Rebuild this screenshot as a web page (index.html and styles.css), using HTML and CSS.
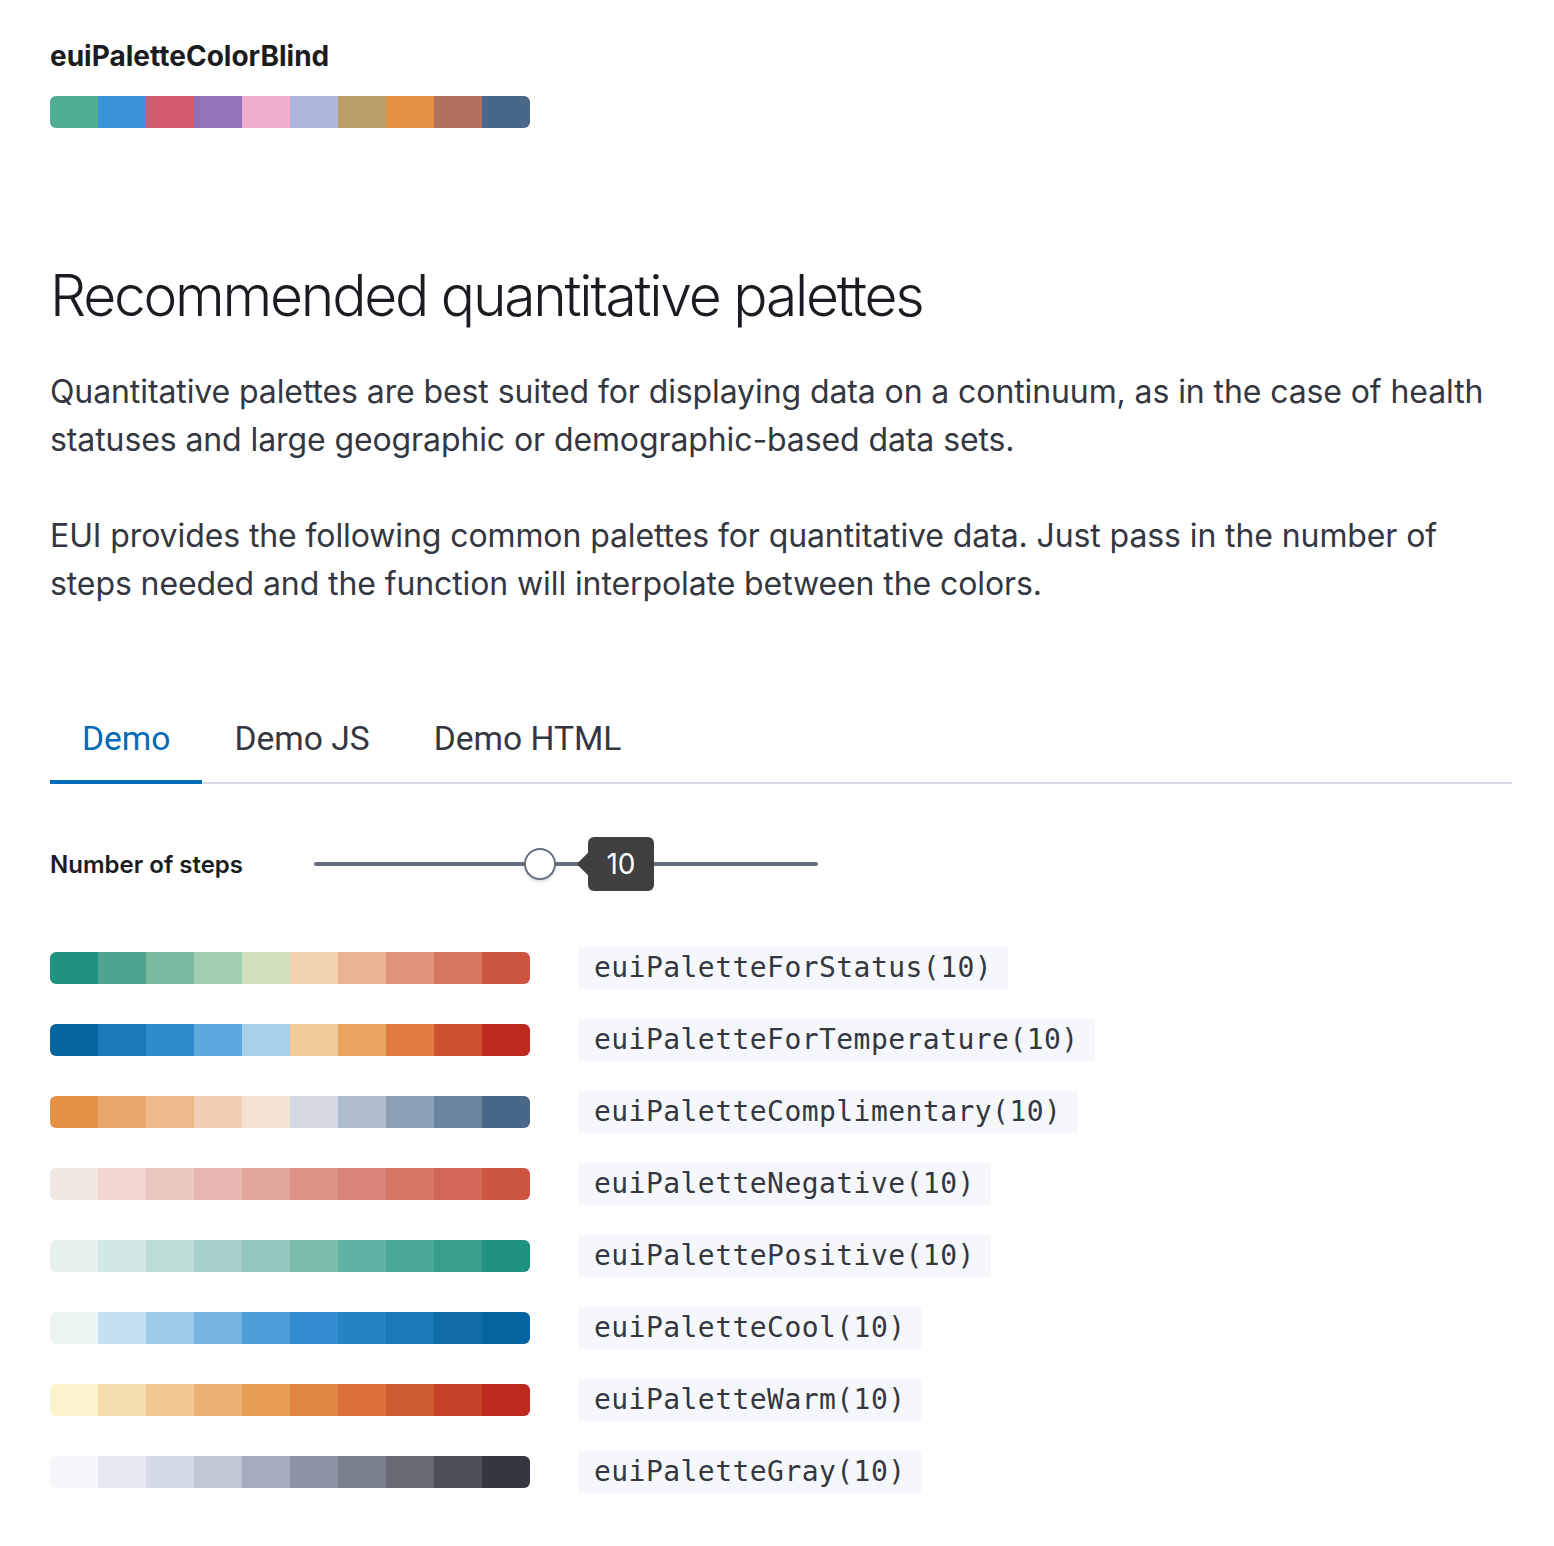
FILE: index.html
```html
<!DOCTYPE html>
<html lang="en">
<head>
<meta charset="UTF-8">
<title>Color palettes</title>
<link rel="stylesheet" href="styles.css">
</head>
<body>
<div class="page">

  <!-- Colour blind palette -->
  <h3 class="small-title">euiPaletteColorBlind</h3>
  <div class="bar">
    <span style="background:#4fae93"></span>
    <span style="background:#3893d8"></span>
    <span style="background:#d35c73"></span>
    <span style="background:#9272bb"></span>
    <span style="background:#eeaed0"></span>
    <span style="background:#adb6dc"></span>
    <span style="background:#b99f67"></span>
    <span style="background:#e49245"></span>
    <span style="background:#b27060"></span>
    <span style="background:#48688a"></span>
  </div>

  <h2 class="big-title">Recommended quantitative palettes</h2>
  <p class="text">Quantitative palettes are best suited for displaying data on a continuum, as in the case of health statuses and large geographic or demographic-based data sets.</p>
  <p class="text">EUI provides the following common palettes for quantitative data. Just pass in the number of steps needed and the function will interpolate between the colors.</p>

  <!-- Tabs -->
  <div class="tabs">
    <div class="tab active">Demo</div>
    <div class="tab">Demo JS</div>
    <div class="tab">Demo HTML</div>
  </div>

  <!-- Slider -->
  <div class="steps-row">
    <label class="steps-label">Number of steps</label>
    <div class="range">
      <div class="track"></div>
      <div class="thumb"></div>
      <div class="range-value">10</div>
    </div>
  </div>

  <!-- Palettes -->
  <div class="palettes">
    <div class="palette-row">
      <div class="bar">
        <span style="background:#209280"></span><span style="background:#4da58f"></span><span style="background:#7aba9e"></span><span style="background:#a3cdb0"></span><span style="background:#cfe1bf"></span><span style="background:#f1d3b0"></span><span style="background:#e7b394"></span><span style="background:#df9579"></span><span style="background:#d57760"></span><span style="background:#cc5642"></span>
      </div>
      <code class="fn">euiPaletteForStatus(10)</code>
    </div>
    <div class="palette-row">
      <div class="bar">
        <span style="background:#0665a1"></span><span style="background:#1978b6"></span><span style="background:#2d8cca"></span><span style="background:#5ca9de"></span><span style="background:#a8cfe8"></span><span style="background:#f1cb97"></span><span style="background:#e9a45f"></span><span style="background:#df7c3f"></span><span style="background:#cd512e"></span><span style="background:#bc2a20"></span>
      </div>
      <code class="fn">euiPaletteForTemperature(10)</code>
    </div>
    <div class="palette-row">
      <div class="bar">
        <span style="background:#e49246"></span><span style="background:#e7a66c"></span><span style="background:#eeb98b"></span><span style="background:#f0cfb4"></span><span style="background:#f3e3d7"></span><span style="background:#d4d9e3"></span><span style="background:#afbdcd"></span><span style="background:#8da1b6"></span><span style="background:#6a849e"></span><span style="background:#486889"></span>
      </div>
      <code class="fn">euiPaletteComplimentary(10)</code>
    </div>
    <div class="palette-row">
      <div class="bar">
        <span style="background:#f2e6e3"></span><span style="background:#f2d4d1"></span><span style="background:#ebc7c2"></span><span style="background:#e8b6b0"></span><span style="background:#e2a69c"></span><span style="background:#dd9486"></span><span style="background:#d9857a"></span><span style="background:#d77665"></span><span style="background:#d06655"></span><span style="background:#cc5642"></span>
      </div>
      <code class="fn">euiPaletteNegative(10)</code>
    </div>
    <div class="palette-row">
      <div class="bar">
        <span style="background:#e7f1ef"></span><span style="background:#d4e8e5"></span><span style="background:#bcddd7"></span><span style="background:#a6d0cb"></span><span style="background:#92c8be"></span><span style="background:#78bca9"></span><span style="background:#61b2a5"></span><span style="background:#4aa897"></span><span style="background:#379e8b"></span><span style="background:#209280"></span>
      </div>
      <code class="fn">euiPalettePositive(10)</code>
    </div>
    <div class="palette-row">
      <div class="bar">
        <span style="background:#ecf4f4"></span><span style="background:#c5e0f1"></span><span style="background:#9ec9e8"></span><span style="background:#75b6e0"></span><span style="background:#4d9fd9"></span><span style="background:#328ed1"></span><span style="background:#2583c3"></span><span style="background:#1b78b6"></span><span style="background:#106da8"></span><span style="background:#0665a1"></span>
      </div>
      <code class="fn">euiPaletteCool(10)</code>
    </div>
    <div class="palette-row">
      <div class="bar">
        <span style="background:#faf3cb"></span><span style="background:#f6ddae"></span><span style="background:#f1c88f"></span><span style="background:#ecb174"></span><span style="background:#e69d54"></span><span style="background:#e08542"></span><span style="background:#dc703a"></span><span style="background:#ce5a2f"></span><span style="background:#c54228"></span><span style="background:#bc2a20"></span>
      </div>
      <code class="fn">euiPaletteWarm(10)</code>
    </div>
    <div class="palette-row">
      <div class="bar">
        <span style="background:#f5f6f9"></span><span style="background:#e6e9f1"></span><span style="background:#d5dbe6"></span><span style="background:#c0c6d3"></span><span style="background:#a5adbc"></span><span style="background:#8c93a3"></span><span style="background:#7a7f8c"></span><span style="background:#656a75"></span><span style="background:#4c4f5a"></span><span style="background:#353740"></span>
      </div>
      <code class="fn">euiPaletteGray(10)</code>
    </div>
  </div>

</div>
</body>
</html>
```

FILE: styles.css
```css
body {
    margin: 0;
    background: #fff;
    font-family: Inter, 'Noto Sans', sans-serif;
    color: #343741;
}

.page {
    padding: 40px 42px 40px 50px;
}

.small-title {
    margin: 0 0 24px;
    font-size: 28px;
    line-height: 32px;
    font-weight: 700;
    color: #1a1c21;
}

.bar {
    display: flex;
    width: 480px;
    height: 32px;
    border-radius: 6px;
    overflow: hidden;
    flex-shrink: 0;
}

.bar span {
    flex: 1;
}

.big-title {
    margin: 132px 0 36px;
    font-size: 57px;
    line-height: 72px;
    font-weight: 300;
    color: #1a1c21;
    letter-spacing: -2.25px;
}

.text {
    margin: 0 0 48px;
    font-size: 32px;
    line-height: 48px;
    color: #343741;
    letter-spacing: -0.1px;
}

.tabs {
    display: flex;
    margin-top: 89px;
    border-bottom: 2px solid #d3dae6;
}

.tab {
    padding: 0 32px;
    font-family: Roboto, 'Liberation Sans', sans-serif;
    font-size: 33.6px;
    line-height: 83px;
    color: #343741;
    margin-bottom: -2px;
    border-bottom: 4px solid transparent;
}

.tab.active {
    color: #006bb8;
    border-bottom-color: #006bb8;
}

.steps-row {
    display: flex;
    align-items: center;
    margin-top: 52px;
}

.steps-label {
    width: 264px;
    font-size: 24px;
    font-weight: 600;
    color: #1a1c21;
}

.range {
    position: relative;
    width: 504px;
    height: 56px;
    display: flex;
    align-items: center;
}

.track {
    width: 100%;
    height: 4px;
    border-radius: 2px;
    background: #69707d;
}

.thumb {
    position: absolute;
    left: 210px;
    top: 12px;
    width: 28px;
    height: 28px;
    border-radius: 50%;
    background: #fff;
    border: 2px solid #69707d;
    box-shadow: 0 2px 3px rgba(0,0,0,0.15);
}

.range-value {
    position: absolute;
    left: 274px;
    top: 1px;
    width: 66px;
    height: 54px;
    border-radius: 6px;
    background: #404040;
    color: #fff;
    font-size: 28px;
    line-height: 54px;
    text-align: center;
}

.range-value::before {
    content: "";
    position: absolute;
    left: -8px;
    top: 19px;
    width: 16px;
    height: 16px;
    background: #404040;
    transform: rotate(45deg);
}

.palettes {
    margin-top: 55px;
}

.palette-row {
    display: flex;
    align-items: center;
    gap: 48px;
    margin-bottom: 30px;
}

.fn {
    padding: 0 16px;
    background: #f5f7fa;
    font-family: 'DejaVu Sans Mono', 'Liberation Mono', monospace;
    font-size: 28px;
    line-height: 42px;
    color: #343741;
    letter-spacing: 0.45px;
}
```
